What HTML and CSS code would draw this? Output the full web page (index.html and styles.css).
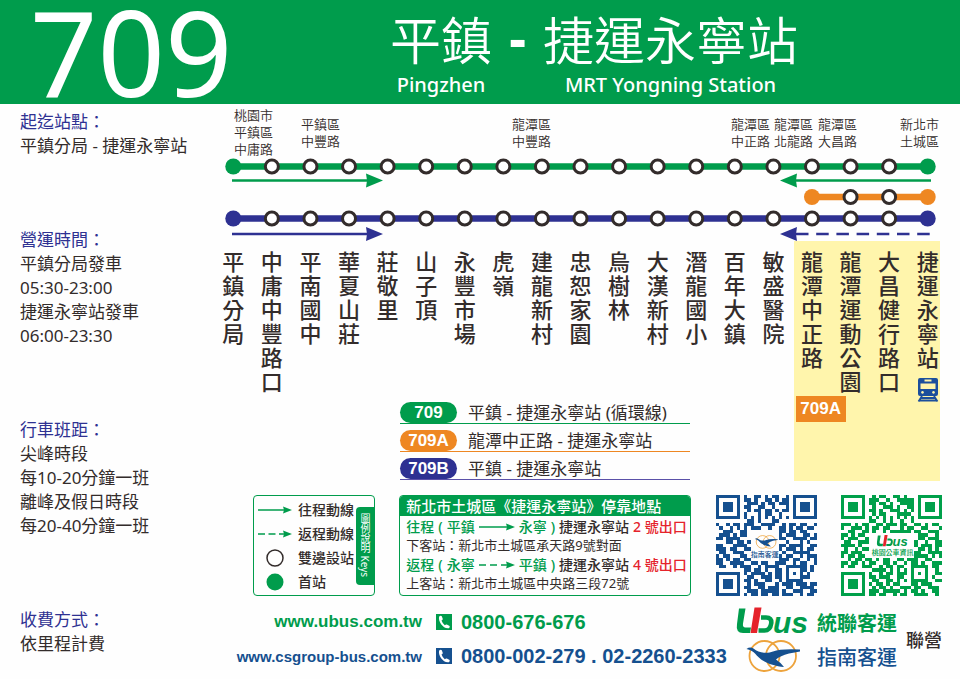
FILE: index.html
```html
<!DOCTYPE html>
<html lang="zh-Hant">
<head>
<meta charset="utf-8">
<meta name="viewport" content="width=device-width, initial-scale=1">
<title>709 平鎮 - 捷運永寧站</title>
<link rel="stylesheet" href="styles.css">
</head>
<body>
<svg class="defs" aria-hidden="true">
  <symbol id="phone" viewBox="0 0 16 16">
    <path fill="currentColor" d="M0 0H16V16H0Z"/>
    <path fill="#fff" d="M3.200 2.500Q4.500 1.400 5.800 2.200L6.800 5Q6.600 6 5.500 6.500Q6.600 9.500 8.800 11.200Q9.800 10.300 10.800 10.500L13.600 12Q14.200 13.400 12.800 14.200C8 15.500 1.500 7.500 3.200 2.500Z"/>
  </symbol>
</svg>

<header class="banner">
  <div class="route-no">709</div>
  <h1 class="route-name">
    <span class="place"><span class="zh">平鎮</span><span class="en">Pingzhen</span></span>
    <span class="dash">-</span>
    <span class="place"><span class="zh">捷運永寧站</span><span class="en">MRT Yongning Station</span></span>
  </h1>
</header>

<div class="page">
  <aside class="facts">
    <section><h2>起迄站點：</h2><p>平鎮分局 - 捷運永寧站</p></section>
    <section><h2>營運時間：</h2><p>平鎮分局發車</p><p>05:30-23:00</p><p>捷運永寧站發車</p><p>06:00-23:30</p></section>
    <section><h2>行車班距：</h2><p>尖峰時段</p><p>每10-20分鐘一班</p><p>離峰及假日時段</p><p>每20-40分鐘一班</p></section>
    <section><h2>收費方式：</h2><p>依里程計費</p></section>
  </aside>

  <main class="main">
    <div class="districts">
      <span>桃園市<br>平鎮區<br>中庸路</span>
      <span>平鎮區<br>中豐路</span>
      <span>龍潭區<br>中豐路</span>
      <span>龍潭區<br>中正路</span>
      <span>龍潭區<br>北龍路</span>
      <span>龍潭區<br>大昌路</span>
      <span>新北市<br>土城區</span>
    </div>

    <svg class="tracks" id="tracks" viewBox="0 0 733 83" role="img" aria-label="路線圖">
      <g stroke-width="6.500">
        <path class="s-green" d="M19.300 8.500H713.700"/>
        <path class="s-orange" d="M598 39H713.700"/>
        <path class="s-navy" d="M19.300 60.500H713.700"/>
      </g>
      <g stroke-width="2.500">
        <path class="s-green" d="M18 22.500H156M579 22.500H717"/>
        <path class="s-navy" d="M18 76H156"/>
        <path class="s-navy" stroke-dasharray="12.500 7.700" d="M582 76H717"/>
      </g>
      <path class="f-green" d="M169 22.500 152 15.500 153 22.500 152 29.500ZM566 22.500 583 15.500 582 22.500 583 29.500Z"/>
      <path class="f-navy" d="M169 76 152 69 153 76 152 83ZM566 76 583 69 582 76 583 83Z"/>
    </svg>

    <div class="board">
      <div class="zone"></div>
      <p class="stop">平鎮分局</p>
      <p class="stop">中庸中豐路口</p>
      <p class="stop">平南國中</p>
      <p class="stop">華夏山莊</p>
      <p class="stop">莊敬里</p>
      <p class="stop">山子頂</p>
      <p class="stop">永豐市場</p>
      <p class="stop">虎嶺</p>
      <p class="stop">建龍新村</p>
      <p class="stop">忠恕家園</p>
      <p class="stop">烏樹林</p>
      <p class="stop">大漢新村</p>
      <p class="stop">潛龍國小</p>
      <p class="stop">百年大鎮</p>
      <p class="stop">敏盛醫院</p>
      <p class="stop">龍潭中正路</p>
      <p class="stop">龍潭運動公園</p>
      <p class="stop">大昌健行路口</p>
      <p class="stop last">捷運永寧站
        <svg class="train" viewBox="0 0 22 24" aria-label="捷運">
          <path fill="#1c4f9c" fill-rule="evenodd" d="M3 0H19Q21 0 21 2V16Q21 18 19 18H3Q1 18 1 16V2Q1 0 3 0ZM7.500 1.500V3.500H14.500V1.500ZM3.500 5.500V11H18.500V5.500ZM5.500 13A1.400 1.400 0 1 0 5.510 13ZM16.500 13A1.400 1.400 0 1 0 16.510 13Z"/>
          <path fill="none" stroke="#1c4f9c" stroke-width="1.800" d="M5 18 1.500 23.500M17 18 20.500 23.500M4 20H18M2.500 22.500H19.500"/>
        </svg>
      </p>
      <span class="branch">709A</span>
      <ul class="routes">
        <li class="r-green"><b>709</b>平鎮 - 捷運永寧站 (循環線)</li>
        <li class="r-orange"><b>709A</b>龍潭中正路 - 捷運永寧站</li>
        <li class="r-navy"><b>709B</b>平鎮 - 捷運永寧站</li>
      </ul>
    </div>

    <div class="panels">
      <section class="keys">
        <ul>
          <li><svg viewBox="0 0 34 18"><path class="s-green" stroke-width="1.500" d="M0 9H28"/><path class="f-green" d="M34 9 25 5.500 26 9 25 12.500Z"/></svg>往程動線</li>
          <li><svg viewBox="0 0 34 18"><path class="s-green" stroke-width="1.500" stroke-dasharray="7 3.500" d="M0 9H28"/><path class="f-green" d="M34 9 25 5.500 26 9 25 12.500Z"/></svg>返程動線</li>
          <li><svg viewBox="0 0 34 18"><circle cx="17" cy="9" r="8" fill="#fff" stroke="#332c2b" stroke-width="1.500"/></svg>雙邊設站</li>
          <li><svg viewBox="0 0 34 18"><circle class="f-green" cx="17" cy="9" r="8.500"/></svg>首站</li>
        </ul>
        <h2>圖例說明 Keys</h2>
      </section>

      <section class="exits">
        <h2>新北市土城區《捷運永寧站》停靠地點</h2>
        <p class="way"><i>往程</i><i>(</i><i>平鎮</i><svg viewBox="0 0 36 12"><path class="s-green" stroke-width="1.500" d="M0 6H30"/><path class="f-green" d="M36 6 27 2.500 28 6 27 9.500Z"/></svg><i>永寧</i><i>)</i><span>捷運永寧站</span><em>2 號出口</em></p>
        <p>下客站：新北市土城區承天路9號對面</p>
        <p class="way"><i>返程</i><i>(</i><i>永寧</i><svg viewBox="0 0 36 12"><path class="s-green" stroke-width="1.500" stroke-dasharray="7 4" d="M0 6H30"/><path class="f-green" d="M36 6 27 2.500 28 6 27 9.500Z"/></svg><i>平鎮</i><i>)</i><span>捷運永寧站</span><em>4 號出口</em></p>
        <p>上客站：新北市土城區中央路三段72號</p>
      </section>

      <svg class="qr" id="qr-csgroup" viewBox="0 0 29 29" role="img" aria-label="指南客運 QR code"></svg>
      <svg class="qr" id="qr-ubus" viewBox="0 0 29 29" role="img" aria-label="桃園公車資訊 QR code"></svg>
    </div>

    <footer class="contact">
      <a class="url green" href="http://www.ubus.com.tw">www.ubus.com.tw</a>
      <svg class="phone green"><use href="#phone"/></svg>
      <a class="tel green" href="tel:0800676676">0800-676-676</a>
      <svg class="logo" viewBox="0 0 72 34" role="img" aria-label="Ubus">
        <path fill="#009c4c" d="M3 3.500H9.500L7 18.500Q6.400 22.500 9.500 22.500H15L14 28H7Q-.5 28 1 19Z"/>
        <path fill="#e5232b" d="M18.500 2.500H25.500L21 28H14.500Z"/>
        <path fill="none" stroke="#009c4c" stroke-width="4.600" d="M25 12.500H30Q36 12.500 35.200 18.500 34.200 25.500 28.500 25.500H22.500"/>
        <text x="37" y="28" class="logo-text">us</text>
      </svg>
      <span class="brand green">統聯客運</span>
      <span class="joint">聯營</span>

      <a class="url small blue" href="http://www.csgroup-bus.com.tw">www.csgroup-bus.com.tw</a>
      <svg class="phone blue"><use href="#phone"/></svg>
      <a class="tel blue" href="tel:0800002279">0800-002-279 . 02-2260-2333</a>
      <svg class="logo" viewBox="0 0 72 34" role="img" aria-label="指南客運">
        <g id="swallow">
          <g fill="none" stroke="#eda33c" stroke-width="1.800"><circle cx="28.500" cy="17" r="15"/><circle cx="45" cy="17" r="15"/></g>
          <path fill="#15508f" d="M10.500 10Q14 7.500 17.500 9.500C23 14 31 15 37 12.500Q45 9.500 64 10.500V12.500L53 14.500Q44 17 40 20.500Q44 23 48 28C37 27 26 23.500 19 14.500Q16 11 10.500 10Z"/>
        </g>
      </svg>
      <span class="brand blue">指南客運</span>
    </footer>
  </main>
</div>
<script src="main.js"></script>
</body>
</html>
```
FILE: styles.css
```css
:root {
  --green: #009c4c;
  --orange: #ee8722;
  --navy: #2e3192;
  --blue: #15508f;
  --ink: #332c2b;
  --latin: "Noto Sans", "Open Sans";
  --cjk: "Noto Sans CJK TC";
}

* { box-sizing: border-box; }

body {
  margin: 0;
  background: #fefefe;
  color: var(--ink);
  font-family: var(--latin), var(--cjk), sans-serif;
  font-size: 17px;
}

h1, h2, p, ul { margin: 0; padding: 0; font-weight: 400; }
ul { list-style: none; }
a { color: inherit; text-decoration: none; }
i, em { font-style: normal; }
svg { display: block; }

.defs { position: absolute; width: 0; height: 0; }
.green { color: var(--green); }
.blue { color: var(--blue); }
.f-green { fill: var(--green); }
.f-navy { fill: var(--navy); }
.f-orange { fill: var(--orange); }
.s-green, .s-navy, .s-orange { fill: none; }
.s-green { stroke: var(--green); }
.s-navy { stroke: var(--navy); }
.s-orange { stroke: var(--orange); }

/* Banner */
.banner {
  display: grid;
  grid-template-columns: 360px 1fr;
  align-items: center;
  height: 104px;
  padding-left: 30px;
  background: var(--green);
  color: #fff;
}
.route-no { font-family: "Noto Sans", sans-serif; font-size: 118px; font-weight: 400; line-height: 104px; }
.route-name { display: flex; align-items: flex-start; font-size: 51px; font-weight: 350; }
.place { display: flex; flex-direction: column; align-items: center; }
.zh { line-height: 66px; font-family: var(--cjk), sans-serif; }
.en { font-size: 20px; font-weight: 500; line-height: 28px; }
.dash { width: 51px; font-weight: 800; line-height: 64px; text-align: center; }

/* Two columns */
.page { display: grid; grid-template-columns: 214px 1fr; }
.facts {
  display: flex;
  flex-direction: column;
  gap: 70px;
  padding: 6px 0 0 20px;
  line-height: 24px;
  white-space: nowrap;
}
.facts h2 { color: var(--navy); font-size: 17px; }
.main { padding: 3px 13px 0 0; }

/* Route diagram */
.districts {
  display: grid;
  grid-template-columns: 67fr 211fr 219fr 43fr 44fr 82fr 47fr;
  align-items: center;
  padding-left: 20px;
  font-size: 13px;
  font-weight: 350;
  line-height: 17px;
  white-space: nowrap;
}
.tracks { width: 100%; }
.board {
  display: grid;
  grid-template-columns: repeat(19, 1fr);
  grid-template-rows: auto 88px;
}
.zone {
  grid-area: 1 / 16 / 3 / 20;
  margin: 0 7px 0 1px;
  background: #fff5ac;
}
.stop {
  grid-row: 1;
  justify-self: center;
  width: 22px;
  padding-top: 8px;
  font-size: 22px;
  font-weight: 500;
  line-height: 24px;
}
.stop:nth-child(2) { grid-column: 1; }
.stop:nth-child(17) { grid-column: 16; }
.stop:nth-child(18) { grid-column: 17; }
.stop:nth-child(19) { grid-column: 18; }
.last { grid-area: 1 / 19 / 3 / 20; }
.train { width: 22px; height: 24px; margin-top: 9px; }
.branch {
  grid-area: 2 / 16 / 3 / 18;
  align-self: start;
  width: 50px;
  margin: 3px 0 0 3px;
  background: var(--orange);
  color: #fff;
  font: bold 17px/26px "Liberation Sans", sans-serif;
  text-align: center;
}
.routes {
  grid-area: 2 / 1 / 3 / 16;
  display: flex;
  flex-direction: column;
  gap: 6px;
  margin: 9px 103px 0 186px;
}
.routes li {
  display: flex;
  gap: 11px;
  border-bottom: 1px solid var(--line);
  line-height: 21px;
  white-space: nowrap;
}
.routes b {
  width: 57px;
  border-radius: 11px;
  background: var(--fill);
  color: #fff;
  font: bold 17px/21px "Liberation Sans", sans-serif;
  text-align: center;
}
.r-green { --fill: var(--green); --line: var(--green); }
.r-orange { --fill: var(--orange); --line: var(--orange); }
.r-navy { --fill: var(--navy); --line: #5a50a8; }

/* Panels */
.panels {
  display: grid;
  grid-template-columns: 122px 292px 101px 101px;
  justify-content: space-between;
  padding: 14px 5px 0 39px;
}
.keys, .exits { border: 1px solid var(--green); border-radius: 4px; }
.keys { display: flex; align-items: center; justify-content: space-between; height: 101px; }
.keys ul { padding-left: 4px; font-size: 14px; font-weight: 500; line-height: 24px; white-space: nowrap; }
.keys li { display: flex; align-items: center; gap: 6px; }
.keys li svg { width: 34px; height: 18px; }
.keys h2 {
  width: 18px;
  height: 78px;
  border-radius: 4px 0 0 4px;
  background: var(--green);
  color: #fff;
  font-size: 10px;
  line-height: 18px;
  text-align: center;
  writing-mode: vertical-rl;
}
.exits { overflow: hidden; font-size: 13px; line-height: 19px; white-space: nowrap; }
.exits h2 {
  padding-left: 6px;
  margin-bottom: 1px;
  background: var(--green);
  color: #fff;
  font-size: 15px;
  font-weight: 500;
  line-height: 20px;
}
.exits p { padding-left: 6px; }
.exits .way { display: flex; align-items: center; gap: 4px; font-size: 14px; font-weight: 500; }
.way i { color: var(--green); }
.way em { color: #e5232b; }
.way svg { width: 36px; height: 12px; }
.qr { width: 101px; height: 101px; }
.qr-text { font-family: var(--cjk), sans-serif; font-size: 2px; font-weight: 500; }

/* Contact lines */
.contact {
  display: grid;
  grid-template-columns: 213px 16px 266px 72px 80px 40px;
  grid-template-rows: 34px 34px;
  align-items: center;
  padding-top: 9px;
  font-family: "Liberation Sans", var(--cjk), sans-serif;
  font-weight: 700;
  white-space: nowrap;
  column-gap: 9px;
}
.url { padding-right: 5px; font-size: 17px; text-align: right; }
.small { font-size: 15px; }
.phone { width: 16px; height: 16px; }
.tel { font-size: 20px; }
.logo { width: 72px; overflow: visible; }
.logo-text { fill: var(--green); font: italic bold 30px "Liberation Sans", sans-serif; }
.brand { font-size: 20px; font-weight: 500; }
.brand.green { font-weight: 700; }
.joint { grid-area: 1 / 6 / 3 / 7; font-size: 18px; font-weight: 500; }
```
FILE: main.js
```js
const NS = 'http://www.w3.org/2000/svg';

function add(parent, name, attrs, text) {
  const el = document.createElementNS(NS, name);
  for (const key in attrs) el.setAttribute(key, attrs[key]);
  if (text) el.textContent = text;
  parent.appendChild(el);
  return el;
}

/* Stops on the three lines: [y, first stop, last stop, colour] */
const tracks = document.getElementById('tracks');
[[8.5, 0, 18, 'f-green'], [39, 15, 18, 'f-orange'], [60.5, 0, 18, 'f-navy']].forEach(([y, from, to, cls]) => {
  for (let i = from; i <= to; i++) {
    const cx = 733 / 19 * (i + 0.5);
    if (i === from || i === to) add(tracks, 'circle', { cx, cy: y, r: 8, class: cls });
    else add(tracks, 'circle', { cx, cy: y, r: 6.5, fill: '#fff', stroke: '#332c2b', 'stroke-width': 3 });
  }
});

const codes = {
  'qr-csgroup': ['#15508f', [
    '........#..##.#.##..#........',
    '........##.#..##.#.##........',
    '.........###.#.##.###........',
    '........##..##..#...#........',
    '.........#.##.##.#.##........',
    '........#...#.##..#..........',
    '........#.#.#.#.#.#.#........',
    '.........##.#...##...........',
    '#..#.##.###..####..#.##.##..#',
    '.#..#.#.#.###..#..##.#.##.##.',
    '..###..##.........##.##.##...',
    '.###.#.##.........#.###..##.#',
    '##.####...........##..####.##',
    '...##.##.#..........#...#.#..',
    '##...####.........##.####..##',
    '###.##..##........#.###.#.##.',
    '.##..###...........#..#####..',
    '#.##...##.........#.##..#.###',
    '##.#.##.##........###.##..#.#',
    '##..####..##.##..###..#.##..#',
    '.##..#.###..#.####..######.#.',
    '........##.##.#..##.#...##.#.',
    '........#.####.#.##.#.#.#.#..',
    '.........##..###.##.#...###..',
    '........##.#..##..#.#####....',
    '.........#.###...#.###.###.##',
    '........##..##.###..##..####.',
    '.........###.#####.#..###..##',
    '........#.##.##.##.###..#.##.'
  ]],
  'qr-ubus': ['#00a04a', [
    '.........#.##..##.#..........',
    '........###..#..#####........',
    '........##.##.#..####........',
    '.........#..###.#..##........',
    '........##.#..###.#.#........',
    '.........#.##...####.........',
    '........#.#.#.#.#.#.#........',
    '........##..#.#..#..#........',
    '###.#.##..##.###.##..##.#.##.',
    '#..###.#.##.##...#.##..##...#',
    '..##..##.#..#.######.##..###.',
    '##.#.##...............###..#.',
    '#.###..#..............##.###.',
    '.##..###.............#..#..##',
    '####.#...............#.###.##',
    '.#..#.##..............##.#.#.',
    '##.###...............##..####',
    '#.##.##..............####.#.#',
    '..#.##.##.#.##..##.###..##...',
    '##.##.#.##..##.#..#.##.#..###',
    '#.##..###..#.##.##..#####.##.',
    '.........####.#.#.#.#...#..#.',
    '........#..#.##.###.#.#.#..##',
    '........##.###..##..#...#.#..',
    '.........##..##.#.#.#####..##',
    '........#.##.#.##...##.###...',
    '.........#.##.#..###.##..###.',
    '........###.#####.#.##.#..##.',
    '........##.##..#.##..####..#.'
  ]]
};

for (const id in codes) {
  const [fill, rows] = codes[id];
  const svg = document.getElementById(id);
  let d = '';
  rows.forEach((row, y) => [...row].forEach((c, x) => {
    if (c === '#') d += `M${x} ${y}h1v1h-1z`;
  }));
  /* Finder squares: outer frame, hole and core */
  [[0, 0], [22, 0], [0, 22]].forEach(([x, y]) => {
    d += `M${x} ${y}h7v7h-7zm1 1v5h5v-5zM${x + 2} ${y + 2}h3v3h-3z`;
  });
  add(svg, 'path', { d, fill, 'shape-rendering': 'crispEdges' });
}

const cs = document.getElementById('qr-csgroup');
const bird = document.getElementById('swallow').cloneNode(true);
bird.removeAttribute('id');
bird.setAttribute('transform', 'translate(9.9 11.4) scale(.122)');
cs.appendChild(bird);
add(cs, 'text', { x: 14, y: 17.9, 'text-anchor': 'middle', class: 'qr-text', fill: '#15508f' }, '指南客運');

const ub = document.getElementById('qr-ubus');
const mark = document.querySelector('.logo').cloneNode(true);
mark.setAttribute('class', '');
for (const [k, v] of Object.entries({ x: 10.2, y: 11.2, width: 9, height: 4.25 })) mark.setAttribute(k, v);
ub.appendChild(mark);
add(ub, 'text', { x: 14.8, y: 17.2, 'text-anchor': 'middle', class: 'qr-text', fill: '#00a04a' }, '桃園公車資訊');
```
